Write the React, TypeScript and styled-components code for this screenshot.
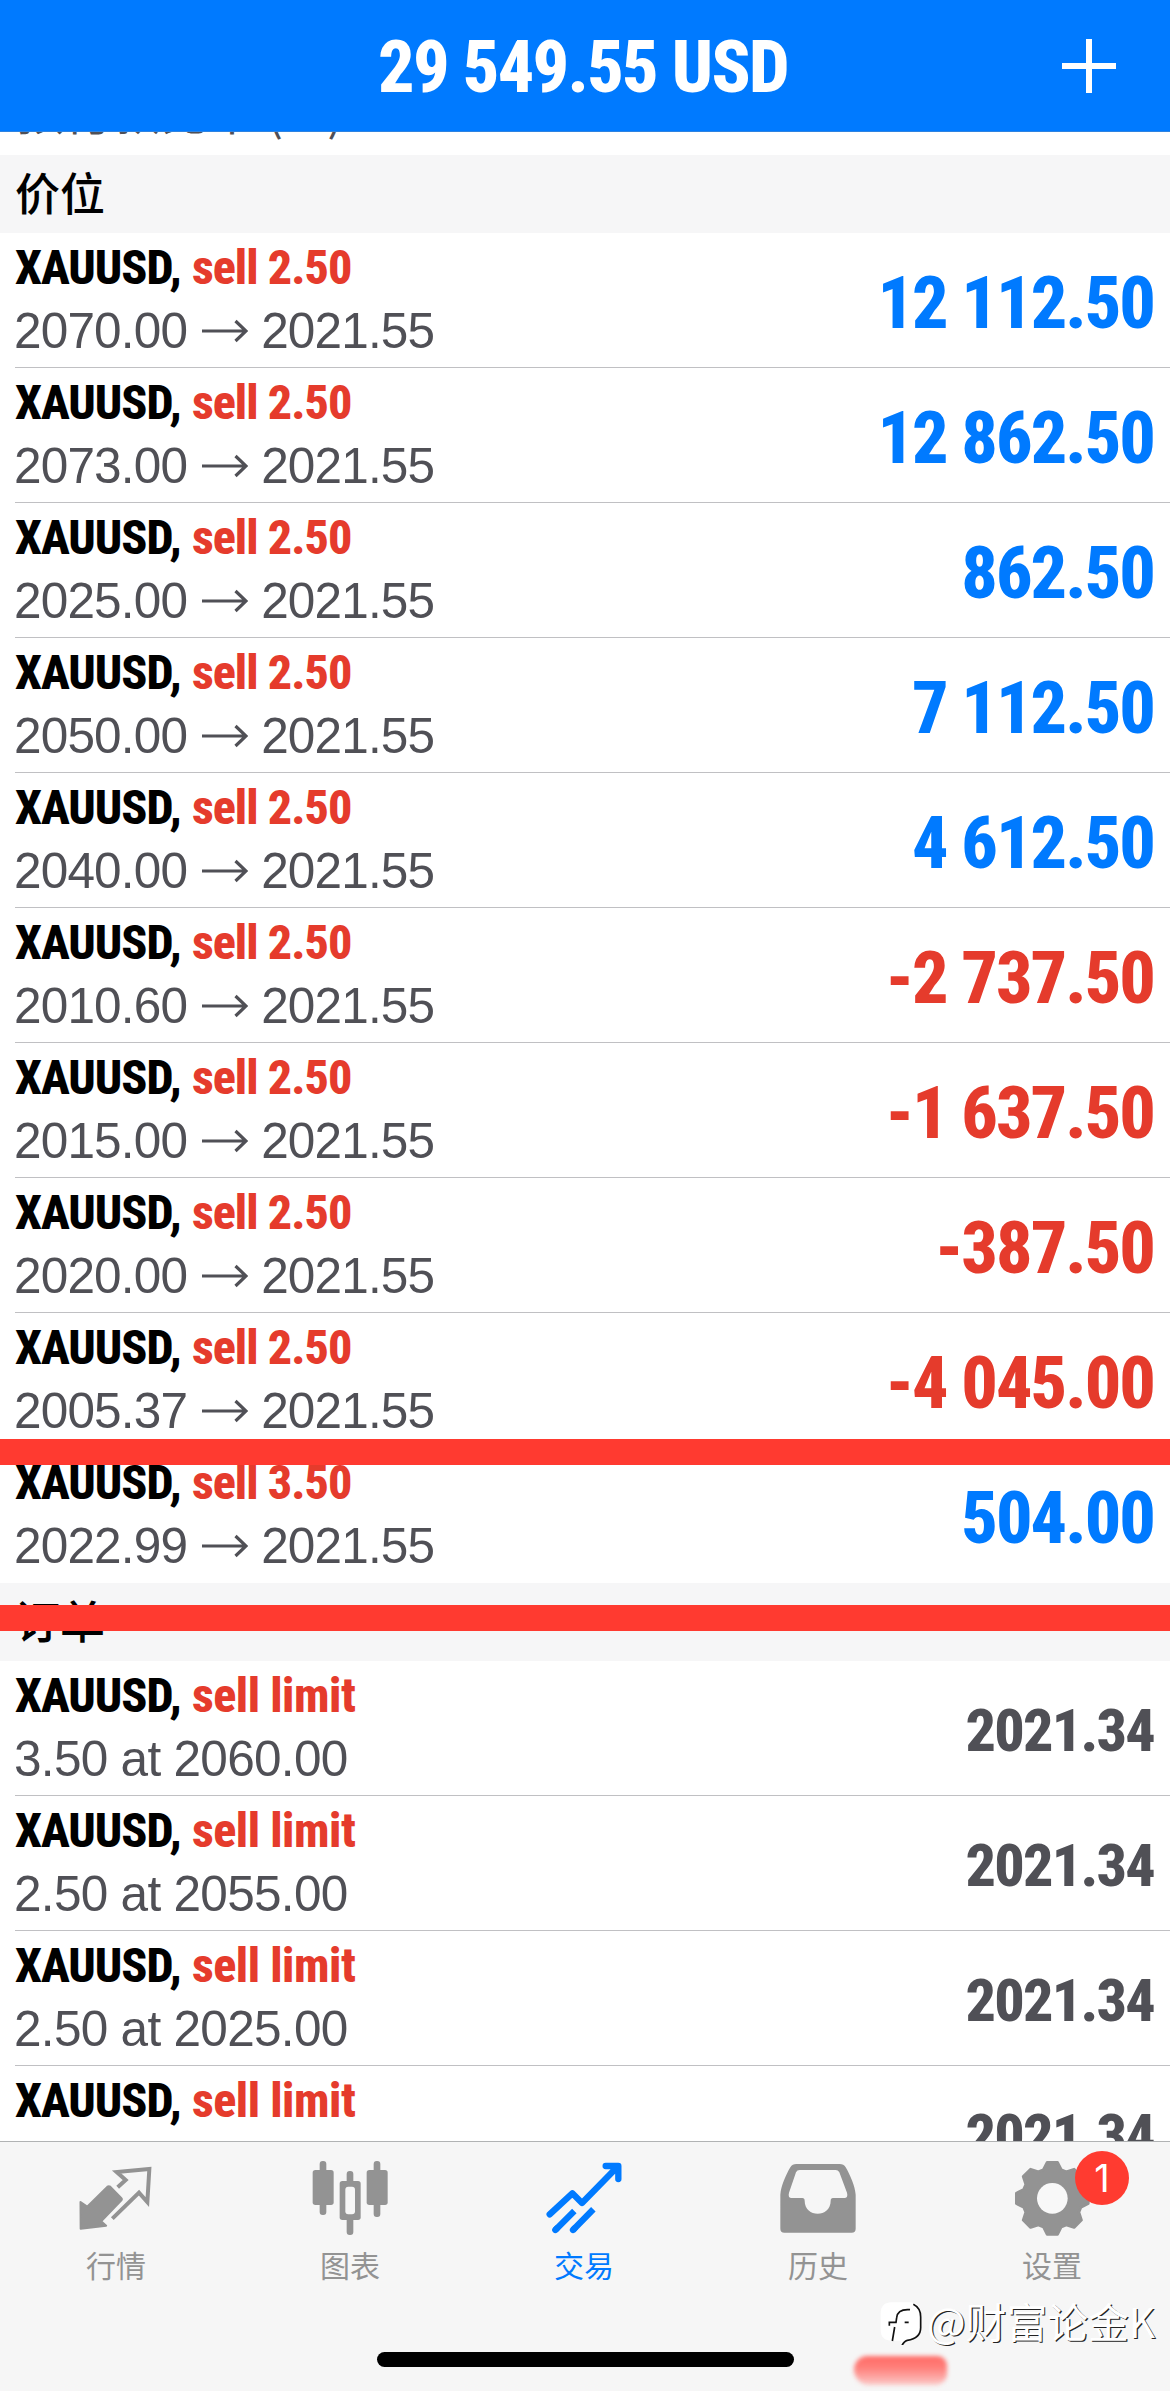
import React from 'react';
import styled, { createGlobalStyle } from 'styled-components';

const BLUE = '#007aff';
const RED = '#e53b2c';
const GREY_TEXT = '#505056';
const ICON_GREY = '#939393';
const CJK = '"Noto Sans CJK SC", sans-serif';
const CONDENSED = '"Roboto Condensed", Roboto, "Liberation Sans", sans-serif';

const GlobalStyle = createGlobalStyle`
  body { margin: 0; background: #ffffff; }
  * { box-sizing: border-box; }
`;

const Screen = styled.div`
  position: relative;
  display: flex;
  flex-direction: column;
  width: 1170px;
  height: 2391px;
  overflow: hidden;
  background: #ffffff;
`;

const Header = styled.header`
  display: grid;
  grid-template-columns: 161px 1fr 162px;
  align-items: center;
  flex: none;
  height: 132px;
  background: ${BLUE};
  border-bottom: 1px solid #2f83e0;
`;

const Title = styled.h1`
  grid-column: 2;
  margin: 0;
  padding: 5px 3px 0 0;
  text-align: center;
  font: 800 72px/72px ${CONDENSED};
  letter-spacing: -1.7px;
  white-space: nowrap;
  color: #ffffff;
`;

const AddButton = styled.button`
  display: flex;
  justify-content: center;
  align-items: center;
  padding: 0;
  border: 0;
  background: none;
`;

const List = styled.main`
  flex: 1;
  min-height: 0;
  overflow: hidden;
`;

const ScrolledRow = styled.div`
  display: flex;
  align-items: flex-end;
  height: 23px;
  padding: 0 16px 16px;
  overflow: hidden;
  font: 400 48px/60px ${CJK};
  color: ${GREY_TEXT};
`;

const SectionHeader = styled.h2`
  display: flex;
  align-items: center;
  height: 78px;
  margin: 0;
  padding: 0 15px 4px;
  background: #f6f6f7;
  font: 500 45px/60px ${CJK};
  color: #000000;
`;

const Row = styled.div`
  display: flex;
  justify-content: space-between;
  height: 135px;
  margin-left: 15px;
  padding-right: 16px;
  border-bottom: 1px solid #c0c0c3;

  &:last-child {
    border-bottom: 0;
  }
`;

const Info = styled.div`
  padding-top: 5px;
`;

const Symbol = styled.div`
  font: 800 48px/60px ${CONDENSED};
  letter-spacing: -1.05px;
  white-space: nowrap;
  color: #000000;
`;

const Side = styled.span<{ $spacing?: number }>`
  margin-left: 1px;
  letter-spacing: ${p => p.$spacing ?? -0.95}px;
  color: ${RED};
`;

const Detail = styled.div<{ $spacing?: number }>`
  display: flex;
  align-items: center;
  gap: 13px;
  margin: 3px 0 0 -1px;
  font: 400 49.5px/60px "Liberation Sans", Arial, sans-serif;
  font-kerning: none;
  letter-spacing: ${p => p.$spacing ?? -0.83}px;
  white-space: nowrap;
  color: ${GREY_TEXT};
`;

const Amount = styled.div<{ $size: number; $color: string }>`
  align-self: center;
  padding-top: ${p => (p.$size > 60 ? 7 : 5)}px;
  font: 800 ${p => p.$size}px/72px ${CONDENSED};
  letter-spacing: ${p => (p.$size > 60 ? -1.95 : -1.75)}px;
  white-space: nowrap;
  color: ${p => p.$color};
`;

const TabBar = styled.nav`
  display: grid;
  grid-template-columns: repeat(5, 1fr);
  flex: none;
  height: 250px;
  border-top: 1px solid #b1b3b4;
  background: #f6f6f6;
`;

const Tab = styled.div<{ $active?: boolean }>`
  display: flex;
  flex-direction: column;
  align-items: center;
  padding: 18px 1px 0 0;
  color: ${p => (p.$active ? BLUE : ICON_GREY)};
`;

const TabIcon = styled.div`
  position: relative;
  width: 75px;
  height: 75px;

  svg {
    display: block;
    overflow: visible;
  }
`;

const TabLabel = styled.span`
  margin: 9px 1px 0 0;
  font: 400 30px/40px ${CJK};
`;

const Badge = styled.span`
  position: absolute;
  left: 60px;
  top: -9px;
  width: 54px;
  height: 54px;
  border-radius: 50%;
  background: #ff3b30;
  font: 400 38px/54px Inter, sans-serif;
  text-align: center;
  color: #ffffff;
`;

const HomeIndicator = styled.div`
  position: absolute;
  left: 377px;
  top: 2352px;
  width: 417px;
  height: 15px;
  border-radius: 8px;
  background: #000000;
`;

const Marker = styled.div<{ $top: number }>`
  position: absolute;
  left: 0;
  top: ${p => p.$top}px;
  width: 100%;
  height: 26px;
  background: #ff3a30;
`;

const Smear = styled.div`
  position: absolute;
  left: 854px;
  top: 2356px;
  width: 93px;
  height: 29px;
  border-radius: 14px 10px 12px 16px;
  background: linear-gradient(180deg, #ff6b66 0%, #ff7f7a 40%, #fda9a6 75%, #fbcbc9 100%);
  filter: blur(2px);
`;

const Watermark = styled.div`
  position: absolute;
  left: 880px;
  top: 2297px;
  display: flex;
  align-items: center;
  gap: 5px;
  font: 400 40.8px/48px ${CJK};
  white-space: nowrap;
  color: #ffffff;
  text-shadow: 1.2px 1.2px 0 #222222;
`;

const PlusIcon = () => (
  <svg width="56" height="56" viewBox="0 0 56 56" fill="none" stroke="#fff" strokeWidth="6">
    <path d="M28 1v54M1 28h54" />
  </svg>
);

const ArrowIcon = () => (
  <svg width="48" height="24" viewBox="0 0 48 24" fill="none" stroke="currentColor" strokeWidth="3.2">
    <path d="M2 12h44M35.500 2l10.500 10-10.500 10" />
  </svg>
);

const QuotesIcon = () => (
  <svg width="75" height="75" viewBox="0 0 225 225">
    <path
      fill="currentColor"
      stroke="currentColor"
      strokeWidth="6"
      strokeLinejoin="round"
      d="M4.500 126l20 14 61-60q4-3 8 0l33 34q4 4 0 8l-60 62 15 13L5 206z"
    />
    <path
      fill="none"
      stroke="currentColor"
      strokeWidth="12"
      strokeLinejoin="miter"
      d="M116 82l24-22-27-24 98-9-6 99-25-28-80 78"
    />
  </svg>
);

const ChartIcon = () => (
  <svg width="75" height="75" viewBox="0 0 225 225" fill="currentColor">
    <rect x="20" y="3" width="20" height="162" rx="9" />
    <rect x="-1" y="30" width="63" height="105" rx="8" />
    <rect x="182" y="3" width="20" height="168" rx="9" />
    <rect x="161" y="30" width="63" height="105" rx="8" />
    <rect x="101" y="33" width="20" height="192" rx="9" />
    <rect x="80" y="63" width="63" height="117" rx="8" />
    <rect x="97" y="80" width="29" height="83" rx="9" fill="#f6f6f6" />
  </svg>
);

const TradeIcon = () => (
  <svg
    width="75"
    height="75"
    viewBox="0 0 225 225"
    fill="none"
    stroke="currentColor"
    strokeWidth="19"
    strokeLinejoin="round"
  >
    <path strokeLinecap="round" d="M8 163l68-63 29 29L210 22M176 18h38v39" />
    <path d="M25 210l57-57M78 210l61-62" />
    <path strokeLinecap="round" d="M25 210l5-5M78 210l5-5" />
  </svg>
);

const HistoryIcon = () => (
  <svg width="75" height="75" viewBox="0 0 225 225" fill="currentColor" fillRule="evenodd">
    <path d="M46 12H176Q188 12 194 22C208 46 222 78 224 104V206Q224 218 212 218H10Q-2 218-2 206V104C0 78 14 46 28 22Q34 12 46 12ZM56 30Q48 30 45 37L24 98Q20 114 32 114H64Q71 114 71 122C71 174 149 174 149 122Q149 114 156 114H190Q202 114 198 98L175 37Q171 30 164 30Z" />
  </svg>
);

const GEAR_POINTS = Array.from({ length: 8 }, (_, i) =>
  [
    [-24, 86],
    [-14, 108],
    [14, 108],
    [24, 86],
  ].map(([offset, radius]) => {
    const a = (i * Math.PI) / 4 + Math.atan2(offset * 1.12, radius);
    const r = Math.hypot(offset * 1.12, radius);
    return `${(112 + r * Math.sin(a)).toFixed(1)},${(115 - r * Math.cos(a)).toFixed(1)}`;
  }).join(' ')
).join(' ');

const SettingsIcon = () => (
  <svg width="75" height="75" viewBox="0 0 225 225">
    <polygon points={GEAR_POINTS} fill="currentColor" stroke="currentColor" strokeWidth="8" strokeLinejoin="round" />
    <circle cx="112" cy="115" r="46" fill="#f8f8f8" />
  </svg>
);

const WatermarkLogo = () => (
  <svg width="42" height="48" viewBox="0 0 126 144" fill="none">
    <path
      fill="#fff"
      d="M36 16h52q34 0 34 34v42c0 22-16 36-40 38l-18 16v-15H36Q2 131 2 99V50q0-34 34-34z"
    />
    <path stroke="#111" strokeWidth="5" d="M100 22c16 8 22 20 22 38v32c0 24-16 34-40 38q-12 4-18 20" />
    <path stroke="#111" strokeWidth="5" d="M90 38c-24-2-38 4-40 24l-2 14H28v10M44 90l-7 42M74 76h12" />
  </svg>
);

type Position = { lots: string; open: string; profit: string };

const POSITIONS: Position[] = [
  { lots: '2.50', open: '2070.00', profit: '12 112.50' },
  { lots: '2.50', open: '2073.00', profit: '12 862.50' },
  { lots: '2.50', open: '2025.00', profit: '862.50' },
  { lots: '2.50', open: '2050.00', profit: '7 112.50' },
  { lots: '2.50', open: '2040.00', profit: '4 612.50' },
  { lots: '2.50', open: '2010.60', profit: '-2 737.50' },
  { lots: '2.50', open: '2015.00', profit: '-1 637.50' },
  { lots: '2.50', open: '2020.00', profit: '-387.50' },
  { lots: '2.50', open: '2005.37', profit: '-4 045.00' },
  { lots: '3.50', open: '2022.99', profit: '504.00' },
];

const ORDERS: { id: number; detail?: string }[] = [
  { id: 1, detail: '3.50 at 2060.00' },
  { id: 2, detail: '2.50 at 2055.00' },
  { id: 3, detail: '2.50 at 2025.00' },
  { id: 4 },
];

const TABS = [
  { label: '行情', Icon: QuotesIcon },
  { label: '图表', Icon: ChartIcon },
  { label: '交易', Icon: TradeIcon, active: true },
  { label: '历史', Icon: HistoryIcon },
  { label: '设置', Icon: SettingsIcon, badge: '1' },
];

export default function App() {
  return (
    <>
      <GlobalStyle />
      <Screen>
        <Header>
          <Title>29 549.55 USD</Title>
          <AddButton aria-label="+">
            <PlusIcon />
          </AddButton>
        </Header>
        <List>
          <ScrolledRow>预付款比率 (%):</ScrolledRow>
          <SectionHeader>价位</SectionHeader>
          <section>
            {POSITIONS.map(p => (
              <Row key={p.open}>
                <Info>
                  <Symbol>
                    XAUUSD, <Side>sell {p.lots}</Side>
                  </Symbol>
                  <Detail>
                    <span>{p.open}</span>
                    <ArrowIcon />
                    <span>2021.55</span>
                  </Detail>
                </Info>
                <Amount $size={72} $color={p.profit.startsWith('-') ? RED : BLUE}>
                  {p.profit}
                </Amount>
              </Row>
            ))}
          </section>
          <SectionHeader>订单</SectionHeader>
          <section>
            {ORDERS.map(o => (
              <Row key={o.id}>
                <Info>
                  <Symbol>
                    XAUUSD, <Side $spacing={-0.45}>sell limit</Side>
                  </Symbol>
                  {o.detail && <Detail $spacing={-0.7}>{o.detail}</Detail>}
                </Info>
                <Amount $size={60} $color={GREY_TEXT}>
                  2021.34
                </Amount>
              </Row>
            ))}
          </section>
        </List>
        <TabBar>
          {TABS.map(({ label, Icon, active, badge }) => (
            <Tab key={label} $active={active}>
              <TabIcon>
                <Icon />
                {badge && <Badge>{badge}</Badge>}
              </TabIcon>
              <TabLabel>{label}</TabLabel>
            </Tab>
          ))}
        </TabBar>
        <Marker $top={1439} />
        <Marker $top={1605} />
        <HomeIndicator />
        <Smear />
        <Watermark>
          <WatermarkLogo />
          <span>@财富论金K</span>
        </Watermark>
      </Screen>
    </>
  );
}
